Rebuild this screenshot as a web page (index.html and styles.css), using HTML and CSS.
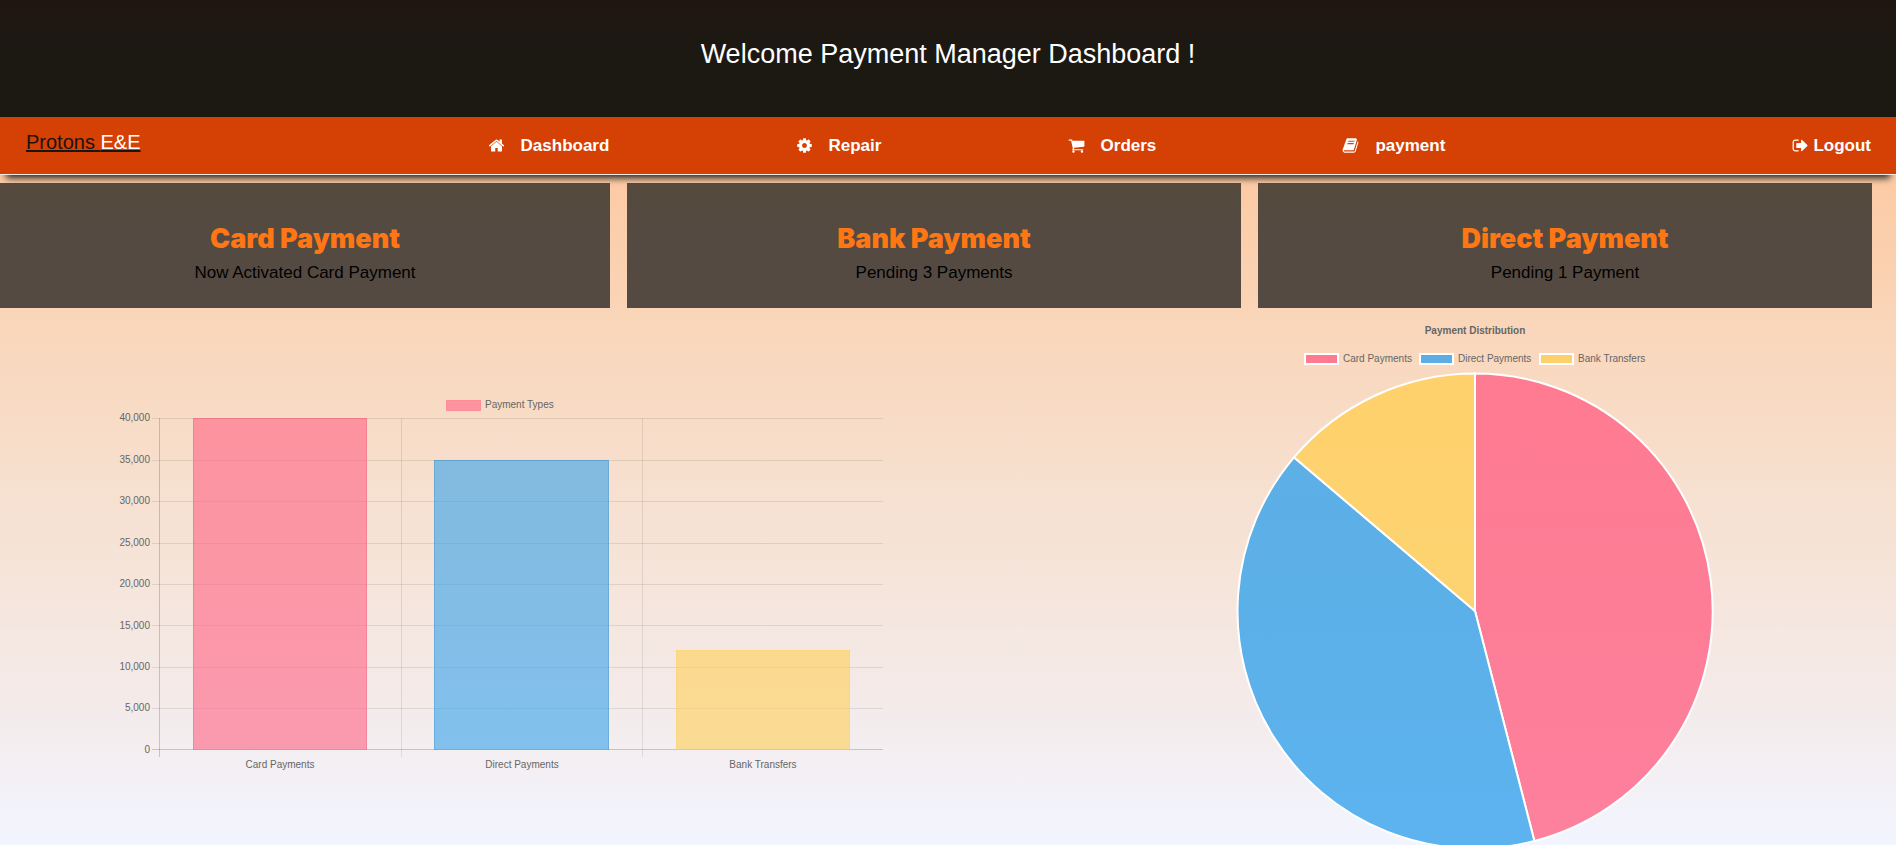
FILE: index.html
```html
<!DOCTYPE html>
<html lang="en">
<head>
<meta charset="utf-8">
<title>Payment Manager Dashboard</title>
<link rel="stylesheet" href="styles.css">
</head>
<body>
<header class="banner"><h1 class="banner-title">Welcome Payment Manager Dashboard !</h1></header>
<nav class="navbar">
  <a class="brand" href="#">Protons <span class="brand-accent">E&amp;E</span></a>
  <ul class="menu">
    <li><a class="nav-link" href="#"><svg class="icon" viewBox="0 0 1792 1792" aria-hidden="true"><path d="M1472 992v480q0 26-19 45t-45 19h-384v-384h-256v384h-384q-26 0-45-19t-19-45v-480q0-1 .5-3t.5-3l575-474 575 474q1 2 1 6zm223-69l-62 74q-8 9-21 11h-3q-13 0-21-7l-692-577-692 577q-12 8-24 7-13-2-21-11l-62-74q-8-10-7-23.500t11-21.500l719-599q32-26 76-26t76 26l244 204v-195q0-14 9-23t23-9h192q14 0 23 9t9 23v408l219 182q10 8 11 21.500t-7 23.500z"/></svg>Dashboard</a></li>
    <li><a class="nav-link" href="#"><svg class="icon" viewBox="0 0 1792 1792" aria-hidden="true"><path d="M1152 896q0-106-75-181t-181-75-181 75-75 181 75 181 181 75 181-75 75-181zm512-109v222q0 12-8 23t-20 13l-185 28q-19 54-39 91 35 50 107 138 10 12 10 25t-9 23q-27 37-99 108t-94 71q-12 0-26-9l-138-108q-44 23-91 38-16 136-29 186-7 28-36 28h-222q-14 0-24.500-8.500t-11.500-21.500l-28-184q-49-16-90-37l-141 107q-10 9-25 9-14 0-25-11-126-114-165-168-7-10-7-23 0-12 8-23 15-21 51-66.500t54-70.500q-27-50-41-99l-183-27q-13-2-21-12.500t-8-23.500v-222q0-12 8-23t19-13l186-28q14-46 39-92-40-57-107-138-10-12-10-24 0-10 9-23 26-36 98.500-107.500t94.500-71.500q13 0 26 10l138 107q44-23 91-38 16-136 29-186 7-28 36-28h222q14 0 24.500 8.500t11.500 21.500l28 184q49 16 90 37l142-107q9-9 24-9 13 0 25 10 129 119 165 170 7 8 7 22 0 12-8 23-15 21-51 66.500t-54 70.500q26 50 41 98l183 28q13 2 21 12.500t8 23.500z"/></svg>Repair</a></li>
    <li><a class="nav-link" href="#"><svg class="icon" viewBox="0 0 1792 1792" aria-hidden="true"><path d="M704 1536q0 52-38 90t-90 38-90-38-38-90 38-90 90-38 90 38 38 90zm896 0q0 52-38 90t-90 38-90-38-38-90 38-90 90-38 90 38 38 90zm128-1088v512q0 24-16.500 42.500t-40.500 21.500l-1044 122q13 60 13 70 0 16-24 64h920q26 0 45 19t19 45-19 45-45 19h-1024q-26 0-45-19t-19-45q0-11 8-31.500t16-36 21.500-40 15.500-29.500l-177-823h-204q-26 0-45-19t-19-45 19-45 45-19h256q16 0 28.500 6.500t19.500 15.500 13 24.500 8 26 5.500 29.500 4.500 26h1201q26 0 45 19t19 45z"/></svg>Orders</a></li>
    <li><a class="nav-link" href="#"><svg class="icon" viewBox="0 0 1792 1792" aria-hidden="true"><path d="M1703 478q40 57 18 129l-275 906q-19 64-76.500 107.500t-122.500 43.500h-923q-77 0-148.500-53.500t-99.500-131.500q-24-67-2-127 0-4 3-27t4-37q1-8-3-21.500t-3-19.500q2-11 8-21t16.500-23.500 16.500-23.500q23-38 45-91.500t30-91.500q3-10 .5-30t-.5-28q3-11 17-28t17-23q21-36 42-92t25-90q1-9-2.500-32t.5-28q4-13 22-30.500t22-22.500q19-26 42.500-84.500t27.500-96.500q1-8-3-25.500t-2-26.500q2-8 9-18t18-23 17-21q8-12 16.500-30.500t15-35 16-36 19.500-32 26.500-23.500 36-11.500 47.500 5.500l-1 3q38-9 51-9h761q74 0 114 56t18 130l-274 906q-36 119-71.500 153.500t-128.500 34.500h-869q-27 0-38 15-11 16-1 43 24 70 144 70h923q29 0 56-15.500t35-41.500l300-987q7-22 5-57 38 15 59 43zm-1064 2q-4 13 2 22.500t20 9.500h608q13 0 25.500-9.500t16.500-22.500l21-64q4-13-2-22.500t-20-9.500h-608q-13 0-25.500 9.500t-16.500 22.500zm-83 256q-4 13 2 22.500t20 9.500h608q13 0 25.500-9.500t16.500-22.500l21-64q4-13-2-22.500t-20-9.500h-608q-13 0-25.500 9.500t-16.500 22.500z"/></svg>payment</a></li>
  </ul>
  <a class="nav-link logout" href="#"><svg class="icon" viewBox="0 0 1792 1792" aria-hidden="true"><path d="M704 1440q0 4 1 20t.5 26.500-3 23.500-10 19.500-20.500 6.500h-320q-119 0-203.500-84.500t-84.500-203.500v-704q0-119 84.500-203.500t203.500-84.500h320q13 0 22.500 9.500t9.500 22.500q0 4 1 20t.5 26.500-3 23.500-10 19.500-20.500 6.500h-320q-66 0-113 47t-47 113v704q0 66 47 113t113 47h312l11.500 1 11.500 3 8 5.500 7 9 2 13.500zm928-544q0 26-19 45l-544 544q-19 19-45 19t-45-19-19-45v-288h-448q-26 0-45-19t-19-45v-384q0-26 19-45t45-19h448v-288q0-26 19-45t45-19 45 19l544 544q19 19 19 45z"/></svg>Logout</a>
</nav>
<main class="content">
  <section class="cards">
    <article class="card"><h2 class="card-title">Card Payment</h2><p class="card-text">Now Activated Card Payment</p></article>
    <article class="card"><h2 class="card-title">Bank Payment</h2><p class="card-text">Pending 3 Payments</p></article>
    <article class="card"><h2 class="card-title">Direct Payment</h2><p class="card-text">Pending 1 Payment</p></article>
  </section>
  <section class="charts">
    <svg class="chart" viewBox="0 0 948 545" role="img" aria-label="Payment Types bar chart">
      <rect class="bar-pink" x="446.500" y="92.500" width="34" height="10"/>
      <text class="label" x="485" y="100">Payment Types</text>
      <path class="grid" d="M152 110.500H883M152 152.500H883M152 193.500H883M152 235.500H883M152 276.500H883M152 317.500H883M152 359.500H883M152 400.500H883M401.500 110V449M642.500 110V449"/>
      <path class="axis" d="M152 441.500H883M159.500 110V449"/>
      <g class="label label-end">
        <text x="150" y="113">40,000</text><text x="150" y="155">35,000</text><text x="150" y="196">30,000</text>
        <text x="150" y="238">25,000</text><text x="150" y="279">20,000</text><text x="150" y="321">15,000</text>
        <text x="150" y="362">10,000</text><text x="150" y="403">5,000</text><text x="150" y="445">0</text>
      </g>
      <rect class="bar-fill-pink" x="193" y="110" width="174" height="332"/>
      <path class="edge-pink" d="M193.500 442V110.500H366.500V442"/>
      <rect class="bar-fill-blue" x="434" y="152" width="175" height="290"/>
      <path class="edge-blue" d="M434.500 442V152.500H608.500V442"/>
      <rect class="bar-fill-yellow" x="676" y="342" width="174" height="100"/>
      <path class="edge-yellow" d="M676.500 442V342.500H849.500V442"/>
      <g class="label label-mid">
        <text x="280" y="460">Card Payments</text><text x="522" y="460">Direct Payments</text><text x="763" y="460">Bank Transfers</text>
      </g>
    </svg>
    <svg class="chart" viewBox="0 0 948 545" role="img" aria-label="Payment Distribution pie chart">
      <text class="label label-mid label-bold" x="527" y="26">Payment Distribution</text>
      <rect class="slice-pink" x="357" y="46" width="33" height="10"/>
      <text class="label" x="395" y="54">Card Payments</text>
      <rect class="slice-blue" x="472" y="46" width="33" height="10"/>
      <text class="label" x="510" y="54">Direct Payments</text>
      <rect class="slice-yellow" x="592" y="46" width="33" height="10"/>
      <text class="label" x="630" y="54">Bank Transfers</text>
      <path class="slice-pink" d="M527 303V65.500A237.500 237.500 0 0 1 586.400 533Z"/>
      <path class="slice-blue" d="M527 303L586.400 533A237.500 237.500 0 0 1 346 149.300Z"/>
      <path class="slice-yellow" d="M527 303L346 149.300A237.500 237.500 0 0 1 527 65.500Z"/>
    </svg>
  </section>
</main>
</body>
</html>
```
FILE: styles.css
```css
* { box-sizing: border-box; }

body {
  margin: 0;
  height: 100vh;
  display: flex;
  flex-direction: column;
  overflow: hidden;
  font-family: Arial, "Liberation Sans", sans-serif;
  font-size: 17px;
  color: #000;
  background: linear-gradient(#fec59a 0%, #fccba5 22%, #f9d8be 42%, #f6e2d4 62%, #f4eae8 82%, #f2f5ff 100%);
}

.banner {
  background: linear-gradient(#201611, #1c1812 45%, #1c1812);
  color: #fff;
  padding: 36px 16px 45px;
  text-align: center;
}

.banner-title {
  margin: 0;
  font-size: 27px;
  line-height: 36px;
  font-weight: 400;
}

.navbar {
  display: flex;
  align-items: center;
  justify-content: space-between;
  min-height: 58px;
  padding: 0 25px 0 26px;
  background: #d54005;
  border-bottom: 1px solid #f7ece6;
  box-shadow: 0 9px 7px -6px #222;
}

.brand {
  font-size: 20px;
  line-height: 24px;
  padding-bottom: 7px;
  color: #1c1410;
  text-decoration: underline;
}

.brand-accent { color: #fff; }

.menu {
  display: flex;
  justify-content: space-around;
  width: 62%;
  margin: 0;
  padding: 0;
  list-style: none;
}

.nav-link {
  display: flex;
  align-items: center;
  gap: 16px;
  color: #fff;
  font-weight: 700;
  line-height: 20px;
  text-decoration: none;
}

.logout { gap: 4px; }

.icon {
  width: 17px;
  height: 17px;
  fill: currentColor;
}

.content {
  flex: 1;
  min-height: 0;
  padding-top: 8px;
}

.cards {
  display: grid;
  grid-template-columns: 610fr 614fr 614fr;
  gap: 17px;
  padding-right: 24px;
}

.card {
  position: relative;
  padding: 40px 16px 23px;
  text-align: center;
  background: linear-gradient(#54493c, #544a41 40%, #544a43);
}

.card-title {
  margin: 0;
  font-family: "Arial Black", Inter, sans-serif;
  font-size: 27px;
  line-height: 32px;
  font-weight: 900;
  color: #ff7614;
}

.card-text {
  margin: 0;
  padding-top: 6px;
  line-height: 24px;
}

.charts {
  display: grid;
  grid-template-columns: 1fr 1fr;
}

.chart { display: block; width: 100%; }

.label { font-size: 10px; fill: #666; }
.label-end { text-anchor: end; }
.label-mid { text-anchor: middle; }
.label-bold { font-weight: 700; }

.grid { stroke: rgba(0, 0, 0, 0.09); fill: none; }
.axis { stroke: rgba(0, 0, 0, 0.18); fill: none; }

.bar-pink { fill: rgba(255, 99, 132, 0.6); stroke: rgba(255, 99, 132, 0.5); }
.bar-fill-pink { fill: rgba(255, 99, 132, 0.6); }
.bar-fill-blue { fill: rgba(54, 162, 235, 0.6); }
.bar-fill-yellow { fill: rgba(255, 206, 86, 0.6); }
.edge-pink { fill: none; stroke: rgba(225, 70, 100, 0.25); }
.edge-blue { fill: none; stroke: rgba(40, 120, 180, 0.25); }
.edge-yellow { fill: none; stroke: rgba(255, 206, 86, 0.3); }

.slice-pink { fill: rgba(255, 99, 132, 0.8); stroke: #fff; stroke-width: 2; }
.slice-blue { fill: rgba(54, 162, 235, 0.8); stroke: #fff; stroke-width: 2; }
.slice-yellow { fill: rgba(255, 206, 86, 0.8); stroke: #fff; stroke-width: 2; }
```
